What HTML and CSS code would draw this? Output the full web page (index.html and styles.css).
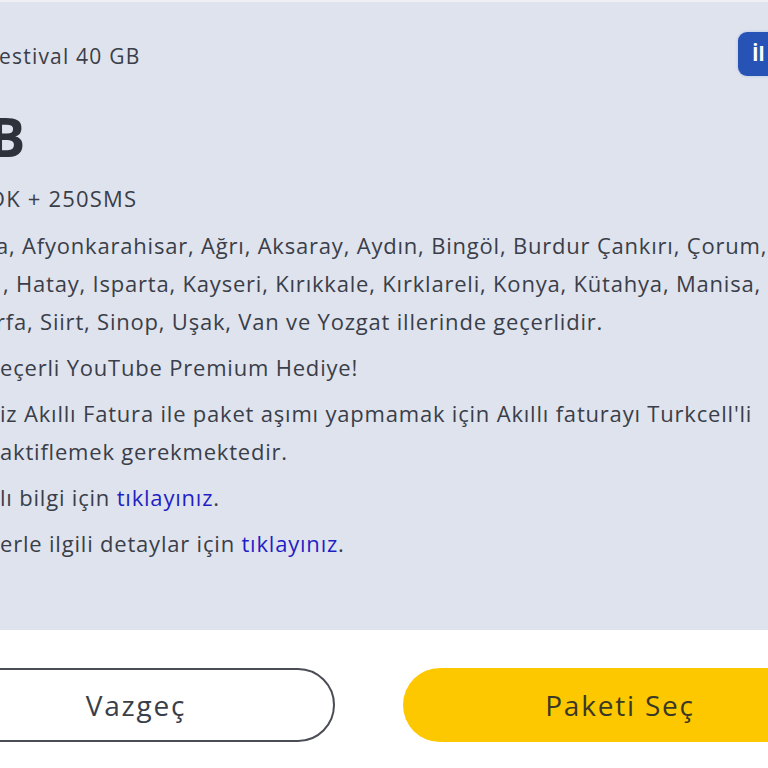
FILE: index.html
```html
<!DOCTYPE html>
<html lang="tr">
<head>
<meta charset="utf-8">
<link rel="stylesheet" href="styles.css">
</head>
<body>
<div class="page">
  <section class="panel">
    <div class="head">
      <div class="title">estival 40 GB</div>
      <div class="badge">İl Bazlı</div>
    </div>
    <div class="big">B</div>
    <div class="sms">DK + 250SMS</div>
    <p class="txt l1">a, Afyonkarahisar, Ağrı, Aksaray, Aydın, Bingöl, Burdur Çankırı, Çorum,<br><span class="l2">, Hatay, Isparta, Kayseri, Kırıkkale, Kırklareli, Konya, Kütahya, Manisa,</span><br>rfa, Siirt, Sinop, Uşak, Van ve Yozgat illerinde geçerlidir.</p>
    <p class="txt">eçerli YouTube Premium Hediye!</p>
    <p class="txt">iz Akıllı Fatura ile paket aşımı yapmamak için Akıllı faturayı Turkcell'li<br>aktiflemek gerekmektedir.</p>
    <p class="txt">lı bilgi için <a class="link">tıklayınız</a>.</p>
    <p class="txt">erle ilgili detaylar için <a class="link">tıklayınız</a>.</p>
  </section>
  <div class="actions">
    <button class="btn btn-outline">Vazgeç</button>
    <button class="btn btn-primary">Paketi Seç</button>
  </div>
</div>
</body>
</html>
```

FILE: styles.css
```css
html, body {
  margin: 0;
  padding: 0;
  width: 768px;
  height: 768px;
  overflow: hidden;
  background: #ffffff;
}
.page {
  font-family: "Open Sans", "Noto Sans", sans-serif;
  color: #3a3e48;
  width: 768px;
}
.panel {
  box-sizing: border-box;
  height: 630px;
  background: #dfe3ee;
  border-top: 2px solid #eef0f5;
  padding-top: 30px;
  overflow: hidden;
}
.head {
  display: flex;
  justify-content: space-between;
  align-items: center;
  height: 44px;
}
.title {
  font-size: 21px;
  letter-spacing: 1.2px;
  margin-left: -1px;
  padding-top: 4px;
}
.badge {
  box-sizing: border-box;
  height: 44px;
  width: 110px;
  margin-right: -80px;
  background: #2753b6;
  color: #ffffff;
  border-radius: 9px;
  font-size: 20px;
  font-weight: 700;
  line-height: 44px;
  padding-left: 14px;
  white-space: nowrap;
  box-shadow: 0 0 3px rgba(39, 83, 182, 0.25);
}
.big {
  font-size: 54px;
  font-weight: 700;
  line-height: 54px;
  margin-top: 33px;
  margin-left: -11px;
  color: #2e323b;
}
.sms {
  font-size: 22px;
  line-height: 30px;
  margin-top: 20px;
  margin-left: -11px;
  letter-spacing: 1.2px;
}
.txt {
  font-size: 22px;
  letter-spacing: 0.8px;
  line-height: 38px;
  margin: 8px 0 0 0;
  white-space: nowrap;
}
.l1 {
  margin-top: 13px;
  margin-left: -4px;
}
.l2 {
  margin-left: 7px;
}
.link {
  color: #1f1fc4;
}
.actions {
  display: flex;
  gap: 68px;
  margin-top: 38px;
}
.btn {
  box-sizing: border-box;
  height: 74px;
  border-radius: 37px;
  font-family: "Open Sans", "Noto Sans", sans-serif;
  font-size: 28px;
  letter-spacing: 1.8px;
  color: #3a3e48;
  flex: none;
}
.btn-outline {
  width: 398px;
  margin-left: -63px;
  background: #ffffff;
  border: 2px solid #4a4d55;
}
.btn-primary {
  width: 434px;
  background: #fdc800;
  border: none;
  color: #3b3828;
}
```
